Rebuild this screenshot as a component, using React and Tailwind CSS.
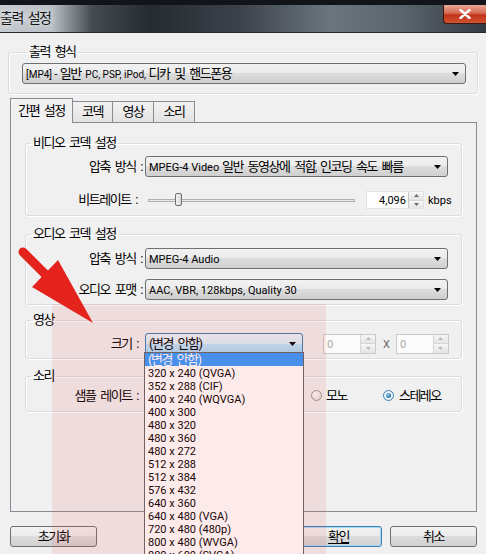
import React from "react";

// Latin runs are drawn smaller/narrower than the Hangul, as in the original dialog
const L = ({ children, small = false }) => (
  <span className={`${small ? "text-[10px]" : "text-[11px]"} tracking-normal [word-spacing:0]`}>{children}</span>
);

const Caret = () => (
  <svg width="7" height="4" viewBox="0 0 7 4" className="flex-none">
    <path d="M0 0h7L3.5 4z" fill="#000" />
  </svg>
);

const Combo = ({ children, open = false, className = "" }) => (
  <div
    className={`flex h-[21px] items-center rounded-[3px] border pl-[3px] pr-[6px] ${
      open
        ? "border-[#3c7fb1] bg-[linear-gradient(#eaf6fd_0%,#d9f0fc_50%,#bee6fd_50%,#a7d9f5_100%)]"
        : "border-[#707070] bg-[linear-gradient(#f2f2f2_0%,#ebebeb_50%,#dddddd_50%,#cfcfcf_100%)]"
    } ${className}`}
  >
    <span className="flex-1 truncate leading-[19px]">{children}</span>
    <Caret />
  </div>
);

const SpinButtons = ({ disabled = false }) => (
  <div
    className={`flex w-[15px] flex-none flex-col self-stretch border-l ${
      disabled ? "border-[#d6d6d6]" : "border-[#c8c8c8]"
    }`}
  >
    {["M0 3L2.5 0L5 3z", "M0 0h5L2.5 3z"].map((d, i) => (
      <div
        key={i}
        className={`flex flex-1 items-center justify-center ${
          i === 0 ? "border-b border-[#d6d6d6]" : ""
        } bg-[linear-gradient(#f6f6f6,#e4e4e4)]`}
      >
        <svg width="5" height="3" viewBox="0 0 5 3">
          <path d={d} fill={disabled ? "#b8b8b8" : "#6c6c6c"} />
        </svg>
      </div>
    ))}
  </div>
);

const Box = ({ title, className = "", children }) => (
  <fieldset
    className={`rounded-[3px] border border-[#d5dfe5] shadow-[inset_1px_1px_0_#fff,1px_1px_0_#fff] ${className}`}
  >
    <legend className="ml-[5px] px-[2px] leading-[16px]">{title}</legend>
    {children}
  </fieldset>
);

const Row = ({ label, children, className = "", labelW = "w-[116px]" }) => (
  <div className={`flex items-center ${className}`}>
    <div className={`${labelW} flex-none text-right`}>{label}</div>
    <div className="ml-[3px] flex items-center">{children}</div>
  </div>
);

const Button = ({ children, focused = false, underline = false }) => (
  <div
    className={`flex h-[21px] w-[87px] items-center justify-center rounded-[3px] border ${
      focused
        ? "border-[#3c7fb1] shadow-[inset_0_0_0_1px_#a7d9f5]"
        : "border-[#707070]"
    } bg-[linear-gradient(#f2f2f2_0%,#ebebeb_50%,#dddddd_50%,#cfcfcf_100%)]`}
  >
    <span className={underline ? "underline underline-offset-2" : ""}>{children}</span>
  </div>
);

const sizes = [
  "320 x 240 (QVGA)",
  "352 x 288 (CIF)",
  "400 x 240 (WQVGA)",
  "400 x 300",
  "480 x 320",
  "480 x 360",
  "480 x 272",
  "512 x 288",
  "512 x 384",
  "576 x 432",
  "640 x 360",
  "640 x 480 (VGA)",
  "720 x 480 (480p)",
  "800 x 480 (WVGA)",
  "800 x 600 (SVGA)",
];

export default function App() {
  return (
    <div className="relative h-[554px] w-[486px] overflow-hidden bg-[#f0f0f0] font-['Liberation_Sans_Narrow','Roboto','Noto_Sans_CJK_KR',sans-serif] text-[13px] tracking-[-1.5px] text-black [word-spacing:3px]">
      {/* Title bar */}
      <div className="flex h-[33px] border-t-[5px] border-b border-t-[#11151a] border-b-[#22272d] bg-[linear-gradient(90deg,#c6cbd0_0px,#b9bfc5_52px,#454b52_92px,#262b31_150px,#3b424a_240px,#6c757e_330px,#5c656d_400px,#343a41_486px)]">
        <span className="mt-[5px] text-[14px] leading-[17px] text-[#151515] [text-shadow:0_0_6px_#fff]">출력 설정</span>
        <div className="ml-auto flex h-[19px] w-[43px] items-center justify-center rounded-bl-[4px] border border-t-0 border-r-0 border-[#3d1710] bg-[linear-gradient(#e9a797_0%,#d56a52_45%,#c2331a_55%,#d1532f_100%)]">
          <svg width="12" height="10" viewBox="0 0 12 10">
            <path d="M1.5 1L10.5 9M10.5 1L1.5 9" stroke="#fff" strokeWidth="2.4" strokeLinecap="round" />
          </svg>
        </div>
      </div>

      {/* Output format */}
      <Box title="출력 형식" className="mx-[8px] mt-[11px] pb-[9px] pl-[13px] pr-[11px]">
        <div className="mt-[3px]">
          <Combo>
            <L small>[MP4] - </L>일반 <L small>PC, PSP, iPod, </L>디카 및 핸드폰용
          </Combo>
        </div>
      </Box>

      {/* Tabs */}
      <div className="ml-[10px] mt-[4px] flex h-[24px] items-end">
        <div className="relative z-10 -mb-px flex h-[25px] w-[63px] items-center justify-center border border-b-0 border-[#898c95] bg-[#f0f0f0]">
          간편 설정
        </div>
        {["코덱", "영상", "소리"].map((t, i) => (
          <div
            key={t}
            className={`-ml-px flex h-[21px] items-center justify-center border border-b-0 border-[#898c95] bg-[linear-gradient(#f2f2f2,#e3e3e3)] ${
              i === 0 ? "w-[41px]" : "w-[42px]"
            }`}
          >
            {t}
          </div>
        ))}
      </div>

      {/* Panel */}
      <div className="ml-[10px] mr-[9px] h-[390px] border border-[#898c95] px-[14px] pt-[12px]">
        <Box title="비디오 코덱 설정" className="pb-[6px] pt-[5px]">
          <Row label="압축 방식 :">
            <Combo className="w-[303px]">
              <L>MPEG-4 Video </L>일반 동영상에 적합<L>, </L>인코딩 속도 빠름
            </Combo>
          </Row>
          <Row label="비트레이트 :" labelW="w-[111px]" className="mt-[14px] h-[18px]">
            <div className="relative ml-[8px] h-[18px] w-[207px]">
              <div className="absolute left-0 right-0 top-[8px] h-[3px] border border-[#b0b0b0] bg-[#e7eaea]" />
              <div className="absolute left-[27px] top-[2px] h-[13px] w-[7px] rounded-[2px] border border-[#707070] bg-[linear-gradient(90deg,#f2f2f2,#d8d8d8)]" />
            </div>
            <div className="ml-[11px] flex h-[18px] w-[58px] border border-[#e2e2e2] bg-white">
              <span className="flex-1 pr-[2px] text-right leading-[16px]">
                <L>4,096</L>
              </span>
              <SpinButtons />
            </div>
            <span className="ml-[4px]">
              <L>kbps</L>
            </span>
          </Row>
        </Box>

        <Box title="오디오 코덱 설정" className="mt-[10px] pb-[4px] pt-[6px]">
          <Row label="압축 방식 :">
            <Combo className="w-[303px]">
              <L>MPEG-4 Audio</L>
            </Combo>
          </Row>
          <Row label="오디오 포맷 :" className="mt-[10px]">
            <Combo className="w-[303px]">
              <L>AAC, VBR, 128kbps, Quality 30</L>
            </Combo>
          </Row>
        </Box>

        <Box title="영상" className="mt-[7px] pb-[4px] pt-[5px]">
          <Row label="크기 :" labelW="w-[112px]">
            <Combo open className="ml-[4px] w-[158px]">
              (변경 안함)
            </Combo>
            {[0, 1].map((k) => (
              <React.Fragment key={k}>
                {k === 1 && (
                  <span className="ml-[7px] mr-[6px] text-[#6d6d6d]">
                    <L>X</L>
                  </span>
                )}
                <div
                  className={`flex h-[20px] w-[53px] border border-[#c9c9c9] bg-[#fbfbfb] ${
                    k === 0 ? "ml-[20px]" : ""
                  }`}
                >
                  <span className="flex-1 pl-[3px] leading-[18px] text-[#a8a8a8]">
                    <L>0</L>
                  </span>
                  <SpinButtons disabled />
                </div>
              </React.Fragment>
            ))}
          </Row>
        </Box>

        <Box title="소리" className="mt-[9px] pb-[5px] pt-[1px]">
          <Row label="샘플 레이트 :" labelW="w-[112px]">
            <Combo className="ml-[4px] w-[158px]" />
            <span className="ml-[8px] h-[11px] w-[11px] rounded-full border border-[#9a9a9a] bg-[radial-gradient(circle_at_40%_35%,#fff,#dcdcdc)]" />
            <span className="ml-[4px]">모노</span>
            <span className="ml-[36px] flex h-[11px] w-[11px] items-center justify-center rounded-full border border-[#3c7fb1] bg-[#e8f2fa]">
              <span className="h-[5px] w-[5px] rounded-full bg-[radial-gradient(circle_at_35%_35%,#8fd0f0,#0d4d80)]" />
            </span>
            <span className="ml-[5px]">스테레오</span>
          </Row>
        </Box>
      </div>

      {/* Bottom buttons */}
      <div className="ml-[10px] mr-[9px] mt-[14px] flex">
        <Button>초기화</Button>
        <div className="ml-auto flex gap-[8px]">
          <Button focused underline>
            확인
          </Button>
          <Button>취소</Button>
        </div>
      </div>

      {/* Open dropdown list */}
      <div className="absolute left-[144px] top-[352px] h-[215px] w-[160px] border border-[#646464] bg-white">
        <div className="h-[13px] bg-[#3399ff] px-[3px] leading-[13px] text-white">(변경 안함)</div>
        {sizes.map((s) => (
          <div key={s} className="h-[13px] px-[3px] leading-[13px]">
            <L>{s}</L>
          </div>
        ))}
      </div>

      {/* Pink highlight overlay */}
      <div className="pointer-events-none absolute left-[52px] top-[304px] h-[250px] w-[274px] bg-[rgba(235,60,60,0.11)]" />

      {/* Red arrow */}
      <svg
        className="pointer-events-none absolute left-0 top-0"
        width="486"
        height="554"
        viewBox="0 0 486 554"
      >
        <line x1="23" y1="252" x2="48" y2="277" stroke="#e3231c" strokeWidth="9" strokeLinecap="round" />
        <path d="M58 260L32 287L93 323z" fill="#e3231c" />
      </svg>
    </div>
  );
}
